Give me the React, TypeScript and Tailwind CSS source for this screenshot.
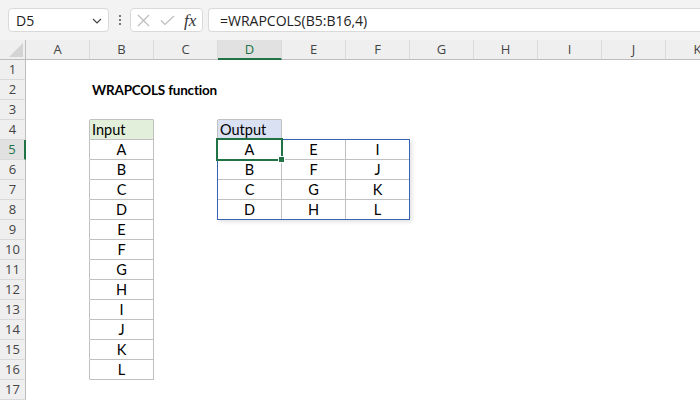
import React from 'react';

const COLS = ['A', 'B', 'C', 'D', 'E', 'F', 'G', 'H', 'I', 'J', 'K'];
const ROWS = Array.from({ length: 17 }, (_, i) => i + 1);

// cell values, keyed "col,row"
const values: Record<string, string> = {
  '2,2': 'WRAPCOLS function',
  '2,4': 'Input',
  '4,4': 'Output',
};
'ABCDEFGHIJKL'.split('').forEach((ch, i) => {
  values[`2,${i + 5}`] = ch;
  values[`${4 + Math.floor(i / 4)},${(i % 4) + 5}`] = ch;
});

function inTable(c: number, r: number) {
  if (c === 2 && r >= 4 && r <= 16) return true;
  if (c === 4 && r === 4) return true;
  return c >= 4 && c <= 6 && r >= 5 && r <= 8;
}

function Cell({ c, r }: { c: number; r: number }) {
  const right = inTable(c, r) || inTable(c + 1, r);
  const bottom = inTable(c, r) || inTable(c, r + 1);
  const text = values[`${c},${r}`];
  const isHeader = r === 4 && (c === 2 || c === 4);
  const isTitle = r === 2 && c === 2;
  const bg = r === 4 && c === 2 ? 'bg-[#e2efda]' : r === 4 && c === 4 ? 'bg-[#d9e1f2]' : '';
  return (
    <div
      className={`box-border h-[20px] border-r border-b ${right ? 'border-r-[#c0c0c0]' : 'border-r-transparent'} ${
        bottom ? 'border-b-[#c0c0c0]' : 'border-b-transparent'
      } ${bg} leading-[20px] text-black whitespace-nowrap ${
        isHeader || isTitle ? 'pl-[2px] text-left' : 'text-center'
      } ${isTitle ? 'font-bold overflow-visible text-[13.5px] tracking-[-0.2px]' : 'overflow-hidden text-[14.5px]'}`}
      style={{ fontFamily: 'Lato, "Liberation Sans", sans-serif' }}
    >
      {text}
    </div>
  );
}

function Toolbar() {
  return (
    <div className="h-[40px] bg-[#f3f3f3] flex items-start pt-[8px] pl-[8px]">
      <div className="w-[101px] h-[24px] bg-white border border-[#d9d9d9] rounded-[4px] flex items-center justify-between pl-[7px] pr-[6px] text-[14px] text-[#222]">
        <span>D5</span>
        <svg width="10" height="6" viewBox="0 0 10 6" className="mt-[1px]">
          <path d="M1 1 L5 5 L9 1" fill="none" stroke="#444" strokeWidth="1.2" />
        </svg>
      </div>
      <div className="w-[21px] h-[24px] flex flex-col items-center justify-center gap-[2px]">
        <span className="w-[2px] h-[2px] bg-[#777]" />
        <span className="w-[2px] h-[2px] bg-[#777]" />
        <span className="w-[2px] h-[2px] bg-[#777]" />
      </div>
      <div className="w-[73px] h-[24px] bg-white border border-[#d9d9d9] rounded-[4px] flex items-center pl-[6px]">
        <svg width="13" height="13" viewBox="0 0 13 13">
          <path d="M1 1 L12 12 M12 1 L1 12" stroke="#bdbdbd" strokeWidth="1.2" fill="none" />
        </svg>
        <svg width="15" height="11" viewBox="0 0 15 11" className="ml-[10px]">
          <path d="M1 5.5 L5 9.5 L14 1" stroke="#bdbdbd" strokeWidth="1.2" fill="none" />
        </svg>
        <span className="ml-[9px] text-[17px] italic text-[#333] leading-none" style={{ fontFamily: '"Liberation Serif", serif' }}>
          fx
        </span>
      </div>
      <div className="ml-[5px] flex-1 h-[24px] bg-white border border-r-0 border-[#d9d9d9] rounded-l-[4px] flex items-center pl-[11px] text-[14px] text-[#222]">
        =WRAPCOLS(B5:B16,4)
      </div>
    </div>
  );
}

export default function App() {
  return (
    <div className="relative w-[700px] h-[400px] overflow-hidden bg-white" style={{ fontFamily: '"Open Sans", "Noto Sans", sans-serif' }}>
      <Toolbar />
      <div className="grid grid-cols-[26px_repeat(11,64px)] grid-rows-[repeat(18,20px)]">
        {/* corner */}
        <div className="box-border bg-[#efefef] border-r border-b border-[#bdbdbd] flex items-end justify-end pr-[2px] pb-[2px]">
          <svg width="14" height="14" viewBox="0 0 14 14">
            <path d="M14 0 L14 14 L0 14 Z" fill="#d3d3d3" />
          </svg>
        </div>
        {COLS.map((col, i) => (
          <div
            key={col}
            className={`box-border border-r border-r-[#d9d9d9] text-[13px] leading-[19px] text-center ${
              i === 3 ? 'bg-[#e1e1e1] text-[#217346] border-b-2 border-b-[#217346]' : 'bg-[#efefef] text-[#444] border-b border-b-[#bdbdbd]'
            }`}
          >
            {col}
          </div>
        ))}
        {ROWS.map((r) => (
          <React.Fragment key={r}>
            <div
              className={`box-border border-b border-b-[#d9d9d9] text-[13px] leading-[19px] text-center ${
                r === 5 ? 'bg-[#e1e1e1] text-[#217346] border-r-2 border-r-[#217346]' : 'bg-[#efefef] text-[#444] border-r border-r-[#bdbdbd]'
              }`}
            >
              {r}
            </div>
            {COLS.map((_, i) => (
              <Cell key={i} c={i + 1} r={r} />
            ))}
          </React.Fragment>
        ))}
      </div>
      {/* spill range border */}
      <div className="absolute left-[217px] top-[139px] w-[193px] h-[81px] border border-[#3763b0] shadow-[2px_2px_4px_rgba(0,0,0,0.12)] pointer-events-none" />
      {/* active cell */}
      <div className="absolute left-[216px] top-[138px] w-[67px] h-[23px] border-2 border-[#217346] pointer-events-none" />
      <div className="absolute left-[278px] top-[156px] w-[7px] h-[7px] bg-[#217346] border border-white pointer-events-none" />
    </div>
  );
}
